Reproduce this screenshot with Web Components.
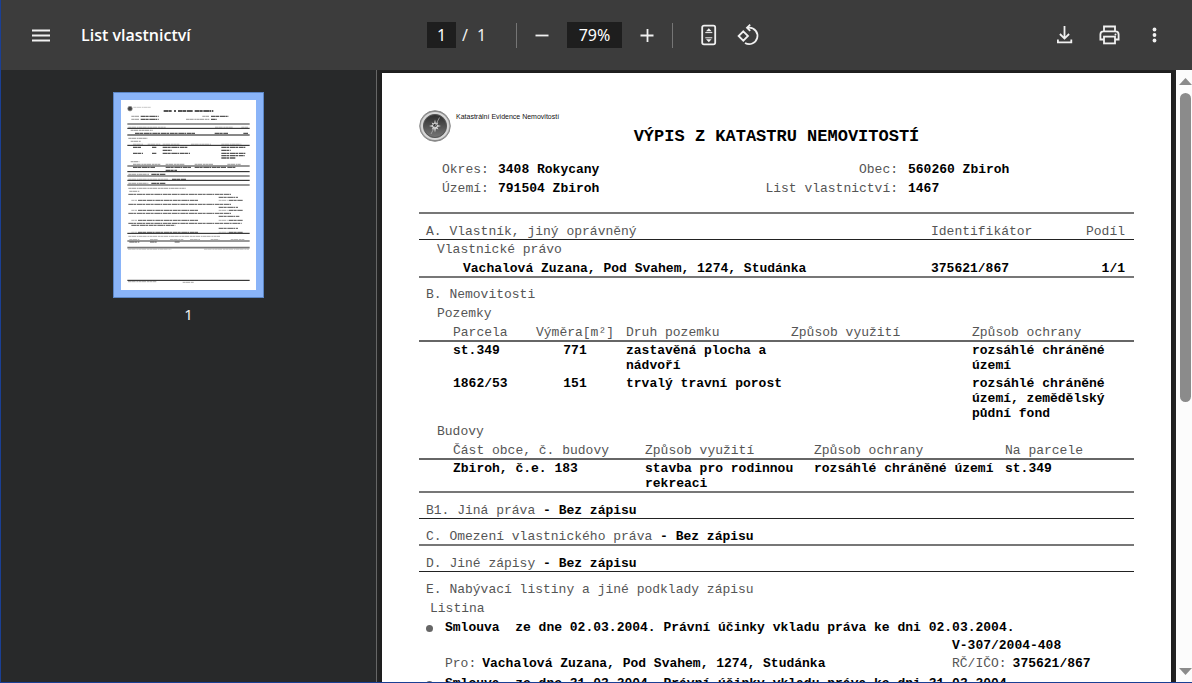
<!DOCTYPE html>
<html lang="cs">
<head>
<meta charset="utf-8">
<meta name="viewport" content="width=device-width, initial-scale=1">
<title>List vlastnictví</title>
<style>
  html, body { margin: 0; height: 100%; overflow: hidden; background: #28292a; }
</style>
</head>
<body>
<pdf-app></pdf-app>

<template id="t-icon-button">
  <style>
    :host { display: block; flex: none; width: 32px; height: 32px; }
    button { display: flex; align-items: center; justify-content: center; width: 100%; height: 100%;
      padding: 0; border: 0; border-radius: 50%; background: none; color: inherit; cursor: pointer; }
    button:hover { background: #555; }
  </style>
  <button type="button"><slot></slot></button>
</template>

<template id="t-toolbar">
  <style>
    :host { display: grid; grid-template-columns: 1fr auto 1fr; align-items: center; height: 70px;
      background: #3c3c3c; color: #f1f1f1; font: 16px "Noto Sans", "Open Sans", sans-serif; }
    .left, .middle, .right { display: flex; align-items: center; }
    .left { padding-left: 24px; gap: 24px; }
    h1 { margin: 0; font-size: 16px; line-height: 24px; font-weight: 600; color: #fff; font-family: "Open Sans", "Noto Sans", sans-serif; white-space: nowrap; }
    .middle { padding-right: 2px; }
    .right { justify-content: flex-end; gap: 13px; padding-right: 21px; }
    input { box-sizing: border-box; height: 26px; border: 0; padding: 0; background: #1e1e1e; color: #fff;
      font: inherit; text-align: center; outline: 0; }
    .page { width: 29px; }
    .zoom { width: 55px; margin: 0 9px; }
    .total { display: flex; gap: 9px; width: 54px; padding-left: 6px; }
    .rule { width: 1px; height: 25px; background: #757575; }
    .rule.a { margin-right: 9px; }
    .rule.b { margin: 0 20px 0 9px; }
    .rotate { margin-left: 7px; }
    svg { display: block; fill: none; stroke: currentColor; stroke-width: 1.800; }
  </style>
  <div class="left">
    <icon-button label="Nabídka"><svg width="18" height="14"><path d="M0 2.500h18M0 7.500h18M0 12.500h18"/></svg></icon-button>
    <h1>List vlastnictví</h1>
  </div>
  <div class="middle">
    <input class="page" type="text" value="1" aria-label="Číslo stránky">
    <div class="total"><span>/</span><span>1</span></div>
    <span class="rule a"></span>
    <icon-button label="Oddálit"><svg width="14" height="14"><path d="M0.500 7.500h13"/></svg></icon-button>
    <input class="zoom" type="text" value="79%" aria-label="Přiblížení">
    <icon-button label="Přiblížit"><svg width="14" height="14"><path d="M0.500 7.500h13M7.500 1v13"/></svg></icon-button>
    <span class="rule b"></span>
    <icon-button label="Přizpůsobit stránce"><svg width="16" height="22" viewBox="0 0 16 22">
      <rect x="1.2" y="1.6" width="13" height="18.800" rx="1.800"/>
      <path d="M4.300 8.600h7M4.300 13.800h7" stroke-width="1"/>
      <path d="M7.800 4.200l2.800 3H5zM7.800 18.200l2.800-3H5z" fill="currentColor" stroke="none"/></svg></icon-button>
    <icon-button class="rotate" label="Otočit proti směru hodinových ručiček"><svg width="24" height="24" viewBox="0 0 24 24">
      <path d="M7.300 8.300l4.700 4.700-4.700 4.700-4.700-4.700zM9 19.900A8.200 8.200 0 1 0 13.200 4.700H10.800M14.200 1.700l-3.200 3 3.200 3.200"/></svg></icon-button>
  </div>
  <div class="right">
    <icon-button label="Stáhnout"><svg width="16" height="18" viewBox="0 0 16 18">
      <path d="M7.500 0v12.400M2.900 8l4.600 4.600L12.100 8M.9 13.400v3h13.400v-3"/></svg></icon-button>
    <icon-button label="Vytisknout"><svg width="22" height="20" viewBox="0 0 22 20">
      <path d="M5 6V1.500h11V6M5 14.500H1.400V9.600Q1.400 6.400 4.500 6.400h12q3.100 0 3.100 3.200v4.900H16"/>
      <rect x="5" y="11.600" width="11" height="6.800"/><circle cx="16.500" cy="9.400" r="1" fill="currentColor" stroke="none"/></svg></icon-button>
    <icon-button label="Další akce"><svg width="6" height="18" viewBox="0 0 6 18" style="fill:currentColor;stroke:none">
      <circle cx="2.500" cy="3.500" r="1.900"/><circle cx="2.500" cy="9" r="1.900"/><circle cx="2.500" cy="14.500" r="1.900"/></svg></icon-button>
  </div>
</template>

<template id="t-thumbnail">
  <style>
    :host { display: flex; flex-direction: column; align-items: center; gap: 4px;
      color: #f1f1f1; font: 15px/24px "Noto Sans", sans-serif; }
    button { display: block; padding: 7px; border: 1px solid #5b85c4; background: #8ab4f8; cursor: pointer; }
    svg { display: block; background: #fff; }
    .l { stroke: #555; stroke-width: 4; stroke-dasharray: 14 1 9 2 17 1 6 2; }
    .g { stroke: #aaa; stroke-width: 4; stroke-dasharray: 9 1 13 2 6 1; }
    .r { stroke: #111; stroke-width: 3; }
    .m { stroke: #777; stroke-width: 5; }
  </style>
  <button type="button" aria-label="Stránka 1">
    <svg width="135" height="190" viewBox="63 45 405 570" fill="none">
      <circle cx="90" cy="71" r="7" fill="#444" stroke="#999" stroke-width="2"/>
      <path class="g" style="stroke-width:2" d="M100 67h52"/>
      <path class="l" style="stroke-width:6" d="M191 78h24M222 78h6M234 78h45M284 78h56"/>
      <path class="g" d="M94 94h23M94 103h23M307 94h20M258 103h70"/>
      <path class="l" d="M122 94h54M122 103h54M333 94h53M333 103h17"/>
      <path class="m" d="M82 117h367M82 243h367M82 273h367M82 300h367M82 468h367M82 488h367"/>
      <path class="r" d="M82 130h367M82 150h367M82 181h367M82 260h367M82 286h367M82 445h367M82 586h367"/>
      <path class="g" d="M85 127h112M345 127h53M424 127h20M92 136h66M85 160h58M92 169h30M99 178h30M143 178h38M188 178h50M273 178h60M364 178h60M92 230h26M99 238h82M197 238h58M284 238h56M382 238h40M85 268h62M85 283h120M85 295h60M85 310h172M88 319h30"/>
      <path class="l" d="M105 145h180M344 145h40M430 145h15M99 187h26M156 187h13M188 187h74M188 196h28M364 187h72M364 196h28M99 205h30M156 205h13M188 205h82M364 205h72M364 212h70M364 219h42M99 247h66M197 247h78M284 247h94M382 247h26M197 256h34M154 268h42M216 283h42M154 295h42"/>
      <path class="l" style="stroke-width:3" d="M85 328h308M356 337h58M114 346h180M386 346h42M85 358h308M356 367h58M114 376h180M386 376h42M85 385h308M356 394h62M114 406h180M386 406h42M85 415h340M94 421h132M356 430h58M114 442h180M386 442h42M88 471h30M150 471h20M224 471h16"/>
      <path class="g" style="stroke-width:3" d="M94 346h17M356 346h27M94 376h17M356 376h27M94 406h17M356 406h27M94 442h17M356 442h27M85 454h275M88 464h30M150 464h25M210 464h40M270 464h30M332 464h26M392 464h42M84 492h130M312 492h135M84 590h85M248 592h34"/>
    </svg>
  </button>
  <span>1</span>
</template>

<template id="t-rail">
  <style>
    :host { display: flex; flex: none; flex-direction: column; align-items: center; box-sizing: border-box;
      width: 16px; padding: 8px 0 7px 3px; background: #fcfcfc; }
    svg { flex: none; fill: #8b8b8b; }
    .track { display: flex; flex-direction: column; flex: 1; width: 11px; margin: 8px 0; }
    .thumb { flex: 6; border-radius: 6px; background: #8b8b8b; }
    .rest { flex: 5; }
  </style>
  <svg width="13" height="7"><path d="M6.500 0L13 7H0z"/></svg>
  <div class="track"><div class="thumb"></div><div class="rest"></div></div>
  <svg width="13" height="7"><path d="M0 0h13L6.500 7z"/></svg>
</template>

<template id="t-deed">
  <style>
    :host { display: grid; grid-template-columns: 19px 507px 1fr; row-gap: 4px; padding: 2px 0 4px 7px; }
    .dot { width: 7px; height: 7px; border-radius: 50%; background: #666; align-self: center; }
    .text { grid-column: 2 / 4; white-space: pre; font-weight: 700; color: #000; }
    .ref { grid-column: 3; }
    .who { grid-column: 2; }
  </style>
  <span class="dot"></span>
  <span class="text"><slot></slot></span>
  <span class="ref"><slot name="ref"></slot></span>
  <span class="who"><slot name="who"></slot></span>
  <span><slot name="id"></slot></span>
</template>

<template id="t-document">
  <style>
    :host { display: block; box-sizing: border-box; padding: 37px; background: #fff; color: #555;
      font: 13px/14px "Liberation Mono", "Courier New", monospace; }
    header { display: grid; }
    .brand, h1 { grid-area: 1 / 1; }
    .brand { display: flex; gap: 5px; color: #111; font: 7px/14px "Liberation Sans", Arial, sans-serif; }
    h1 { margin: 17px 0 13px; font-size: 17px; line-height: 20px; text-align: center; color: #000; }
    dl { display: grid; grid-template-columns: 56px 1fr auto 226px; margin: 0; padding: 0 0 14px 23px;
      line-height: 19px; border-bottom: 2px solid #777; }
    dd { margin: 0; }
    dt.end { text-align: right; margin-right: 10px; }
    b, dd, td { font-weight: 700; color: #000; }
    h2, h3 { margin: 0; font-size: 13px; line-height: 14px; font-weight: 400; }
    h2 { padding: 11px 0 3px 7px; }
    h2.near { padding-top: 10px; }
    h3 { padding: 2px 0 3px 18px; }
    table + h3 { margin-top: 2px; }
    h2.line { padding-bottom: 0; border-bottom: 1px solid #222; }
    h2.soft { border-bottom: 2px solid #777; }
    h3.tight { padding-left: 11px; }
    table { width: 100%; border-collapse: separate; border-spacing: 0; table-layout: fixed; }
    th, td { padding: 0; text-align: left; vertical-align: top; }
    th { padding-top: 2px; font-weight: 400; border-bottom: 2px solid #666; white-space: nowrap; }
    td { padding: 1px 0 2px; line-height: 15px; }
    tbody tr:last-child td { padding-bottom: 0; }
    th:first-child, td:first-child { padding-left: 34px; }
    .mid { text-align: center; }
    .kind { padding-left: 11px; }
    .owners th { padding-top: 11px; border-bottom: 1px solid #222; }
    .owners th:first-child { padding-left: 7px; }
    .owners td { padding-top: 3px; line-height: 14px; }
    .owners td.sub { padding-left: 18px; font-weight: 400; color: #555; }
    .owners td:first-child:not(.sub) { padding-left: 44px; }
    .owners .share { text-align: right; padding-right: 9px; }
    .closed { border-bottom: 2px solid #777; }
    .pair { display: flex; gap: 6px; white-space: nowrap; }
  </style>
  <header>
    <div class="brand">
      <svg width="32" height="32" viewBox="0 0 32 32" aria-hidden="true">
        <defs>
          <linearGradient id="rim" x2="0" y2="1"><stop stop-color="#888"/><stop offset=".5" stop-color="#bbb"/><stop offset="1" stop-color="#888"/></linearGradient>
          <linearGradient id="face" x2="0" y2="1"><stop stop-color="#2c2c2c"/><stop offset="1" stop-color="#777"/></linearGradient>
        </defs>
        <circle cx="16" cy="16" r="15.300" fill="url(#rim)" stroke="#888"/>
        <circle cx="16" cy="16" r="13" fill="none" stroke="#d8d8d8" stroke-width="2"/>
        <circle cx="16" cy="16" r="11.500" fill="url(#face)" stroke="#555"/>
        <path d="M16 9.500l.9 4 2.300-1.200-1 2.700L22 16l-3.800 1 1.200 2.500-2.500-1L16 22.500l-.9-4-2.300 1.200 1-2.700L10 16l3.800-1L12.700 12.500l2.400 1z" fill="#ddd"/>
        <circle cx="16" cy="15.500" r="1.800" fill="#333"/><path d="M20.500 7.500L12 24" stroke="#bbb" stroke-width=".7"/>
      </svg>
      <span>Katastrální Evidence Nemovitostí</span>
    </div>
    <h1>VÝPIS Z KATASTRU NEMOVITOSTÍ</h1>
  </header>
  <dl>
    <dt>Okres:</dt><dd>3408 Rokycany</dd><dt class="end">Obec:</dt><dd>560260 Zbiroh</dd>
    <dt>Území:</dt><dd>791504 Zbiroh</dd><dt class="end">List vlastnictví:</dt><dd>1467</dd>
  </dl>

  <table class="owners closed">
    <colgroup><col><col style="width:120px"><col style="width:83px"></colgroup>
    <thead><tr><th>A. Vlastník, jiný oprávněný</th><th>Identifikátor</th><th class="share">Podíl</th></tr></thead>
    <tbody>
      <tr><td class="sub" colspan="3">Vlastnické právo</td></tr>
      <tr><td>Vachalová Zuzana, Pod Svahem, 1274, Studánka</td><td>375621/867</td><td class="share">1/1</td></tr>
    </tbody>
  </table>

  <h2 class="near">B. Nemovitosti</h2>
  <h3>Pozemky</h3>
  <table>
    <colgroup><col style="width:116px"><col style="width:80px"><col style="width:176px"><col><col style="width:162px"></colgroup>
    <thead><tr><th>Parcela</th><th class="mid">Výměra[m²]</th><th class="kind">Druh pozemku</th><th>Způsob využití</th><th>Způsob ochrany</th></tr></thead>
    <tbody>
      <tr><td>st.349</td><td class="mid">771</td><td class="kind">zastavěná plocha a nádvoří</td><td></td><td>rozsáhlé chráněné území</td></tr>
      <tr><td>1862/53</td><td class="mid">151</td><td class="kind">trvalý travní porost</td><td></td><td>rozsáhlé chráněné území, zemědělský půdní fond</td></tr>
    </tbody>
  </table>
  <h3>Budovy</h3>
  <table class="closed">
    <colgroup><col style="width:226px"><col style="width:169px"><col><col style="width:129px"></colgroup>
    <thead><tr><th>Část obce, č. budovy</th><th>Způsob využití</th><th>Způsob ochrany</th><th>Na parcele</th></tr></thead>
    <tbody><tr><td>Zbiroh, č.e. 183</td><td>stavba pro rodinnou rekreaci</td><td>rozsáhlé chráněné území</td><td>st.349</td></tr></tbody>
  </table>

  <h2 class="line">B1. Jiná práva <b>- Bez zápisu</b></h2>
  <h2 class="line soft">C. Omezení vlastnického práva <b>- Bez zápisu</b></h2>
  <h2 class="line">D. Jiné zápisy <b>- Bez zápisu</b></h2>

  <h2>E. Nabývací listiny a jiné podklady zápisu</h2>
  <h3 class="tight">Listina</h3>
  <deed-item>Smlouva  ze dne 02.03.2004. Právní účinky vkladu práva ke dni 02.03.2004.<b slot="ref">V-307/2004-408</b><span slot="who" class="pair">Pro:<b>Vachalová Zuzana, Pod Svahem, 1274, Studánka</b></span><span slot="id" class="pair">RČ/IČO:<b>375621/867</b></span></deed-item>
  <deed-item>Smlouva  ze dne 31.03.2004. Právní účinky vkladu práva ke dni 31.03.2004.</deed-item>
</template>

<template id="t-app">
  <style>
    :host { display: flex; flex-direction: column; box-sizing: border-box; height: 100vh; overflow: hidden;
      border-left: 1px solid #1a3f94; border-bottom: 1px solid #1a3f94; background: #28292a; }
    pdf-toolbar { flex: none; }
    .body { display: flex; flex: 1; min-height: 0; }
    nav { box-sizing: border-box; flex: none; width: 376px; padding-top: 22px; border-right: 1px solid #666; }
    main { flex: 1; min-width: 0; overflow: hidden; padding: 3px 5px 0; background: #242424; }
    land-document { box-shadow: 0 0 3px 1px #1a1a1a; }
  </style>
  <pdf-toolbar></pdf-toolbar>
  <div class="body">
    <nav aria-label="Miniatury"><page-thumbnail></page-thumbnail></nav>
    <main><land-document></land-document></main>
    <scroll-rail></scroll-rail>
  </div>
</template>

<script>
  function register(name, templateId, setup) {
    customElements.define(name, class extends HTMLElement {
      constructor() {
        super();
        this.attachShadow({ mode: 'open' })
          .append(document.getElementById(templateId).content.cloneNode(true));
      }
      connectedCallback() { if (setup) setup(this); }
    });
  }
  register('icon-button', 't-icon-button', el => {
    el.shadowRoot.querySelector('button').setAttribute('aria-label', el.getAttribute('label'));
  });
  register('pdf-toolbar', 't-toolbar');
  register('page-thumbnail', 't-thumbnail');
  register('scroll-rail', 't-rail');
  register('deed-item', 't-deed');
  register('land-document', 't-document');
  register('pdf-app', 't-app');
</script>
</body>
</html>
